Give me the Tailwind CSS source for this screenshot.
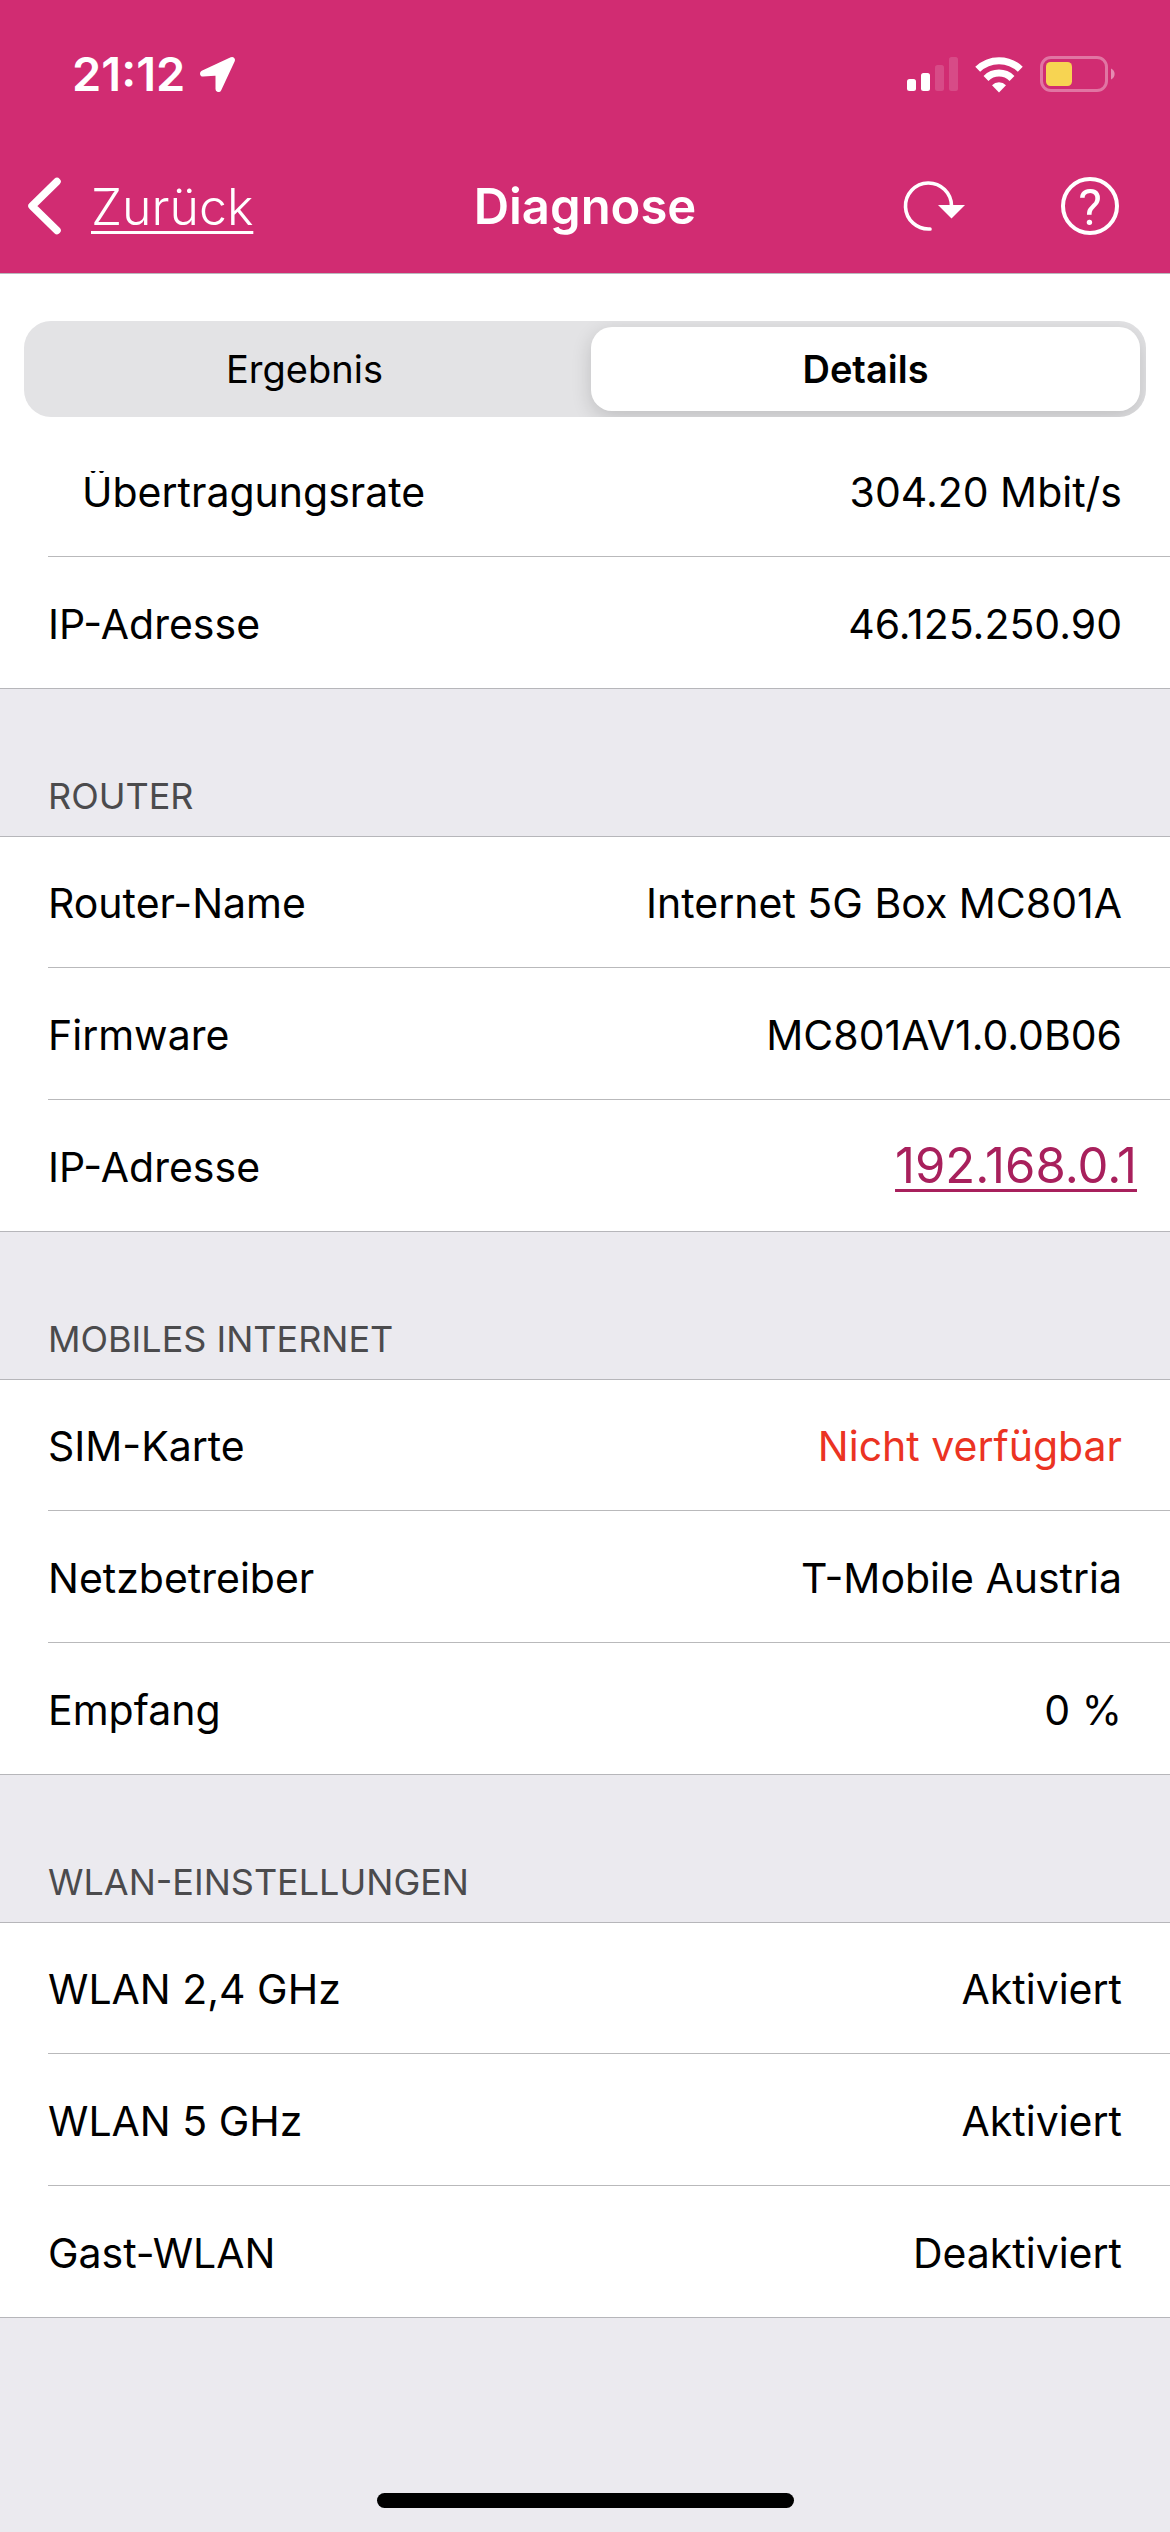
<!DOCTYPE html>
<html lang="de">
<head>
<meta charset="utf-8">
<meta name="viewport" content="width=device-width, initial-scale=1">
<title>Diagnose</title>
<script src="https://cdn.jsdelivr.net/npm/@tailwindcss/browser@4"></script>
</head>
<body class="flex min-h-screen flex-col bg-[#ebeaef] font-['Inter',sans-serif] text-[41px] leading-[50px] text-black">

<header class="border-b border-[#b9b9bc] bg-[#d12c72] pb-[9px] text-white">
  <!-- Status bar -->
  <div class="flex h-[148px] items-center justify-between pr-[54px] pl-[72px]">
    <div class="flex items-center gap-[13px]">
      <span class="text-[47px] font-semibold">21:12</span>
      <svg class="size-[38px]" viewBox="0 0 38 38" fill="white" stroke="white" stroke-width="6" stroke-linejoin="round" aria-hidden="true">
        <path d="M5 18.500L34 5L20.500 34V17.500Z"/>
      </svg>
    </div>
    <div class="flex items-center gap-[17px]">
      <svg class="h-[36px] w-[51px]" viewBox="0 0 51 36" fill="white" aria-hidden="true">
        <rect x="0" y="23" width="9" height="12" rx="2.500"/>
        <rect x="14" y="17" width="9" height="18" rx="2.500"/>
        <rect x="28" y="9" width="9" height="26" rx="2.500" fill-opacity=".15"/>
        <rect x="42" y="1" width="9" height="34" rx="2.500" fill-opacity=".15"/>
      </svg>
      <svg class="h-[37px] w-[48px]" viewBox="0 0 48 37" aria-hidden="true">
        <g fill="none" stroke="white" stroke-width="7">
          <path d="M2.700 13.300A30.500 30.500 0 0 1 45.300 13.300"/>
          <path d="M11 22.400A18.600 18.600 0 0 1 37 22.400"/>
        </g>
        <path d="M24 36.500L17 29.200A10 10 0 0 1 31 29.200Z" fill="white"/>
      </svg>
      <svg class="h-[36px] w-[76px]" viewBox="0 0 76 36" aria-hidden="true">
        <rect x="1.500" y="1.500" width="65" height="33" rx="9.500" fill="none" stroke="white" stroke-opacity=".35" stroke-width="3"/>
        <rect x="6" y="6" width="26" height="24" rx="4.500" fill="#f7d452"/>
        <path d="M71 12.500A6 6 0 0 1 71 23.500Z" fill="white" fill-opacity=".45"/>
      </svg>
    </div>
  </div>
  <!-- Navigation bar -->
  <nav class="grid h-[116px] grid-cols-[1fr_auto_1fr] items-center text-[49px] leading-[60px]">
    <a href="#" class="flex items-center gap-[29px] pl-[27px] text-[50px] font-light">
      <svg class="h-[58px] w-[35px]" viewBox="0 0 35 58" fill="none" stroke="white" stroke-width="7.500" stroke-linecap="round" stroke-linejoin="round" aria-hidden="true">
        <path d="M30 4.500L5 29L30 53.500"/>
      </svg>
      <span class="pt-[2px] underline decoration-[3px] underline-offset-[6px]">Zurück</span>
    </a>
    <h1 class="pt-[2px] font-semibold">Diagnose</h1>
    <div class="flex items-center justify-end gap-[96px] pr-[51px]">
      <button type="button" aria-label="Aktualisieren">
        <svg class="block h-[58px] w-[62px]" viewBox="0 0 62 58" aria-hidden="true">
          <path d="M27 52A23 23 0 1 1 48.500 29" fill="none" stroke="white" stroke-width="3.600" stroke-linecap="round"/>
          <path d="M35 28H62L48.500 41.500Z" fill="white"/>
        </svg>
      </button>
      <button type="button" aria-label="Hilfe">
        <svg class="block size-[58px]" viewBox="0 0 58 58" aria-hidden="true">
          <circle cx="29" cy="29" r="27" fill="none" stroke="white" stroke-width="4"/>
          <text x="29" y="48" text-anchor="middle" fill="white" class="font-['Roboto',sans-serif] text-[50px] font-normal">?</text>
        </svg>
      </button>
    </div>
  </nav>
</header>

<!-- Result / details switch -->
<div class="bg-white px-[24px] pt-[47px] pb-[54px]">
  <div role="tablist" class="grid grid-cols-2 overflow-hidden rounded-[27px] bg-[#e3e3e5] p-[6px] text-[38px]">
    <button type="button" role="tab" aria-selected="false" class="h-[84px] pr-[6px]">Ergebnis</button>
    <button type="button" role="tab" aria-selected="true" class="ml-[6px] h-[84px] rounded-[21px] bg-white font-semibold shadow-[0_6px_20px_rgba(0,0,0,0.16)]">Details</button>
  </div>
</div>

<main class="overflow-hidden">
  <!-- First row is partly scrolled out of view -->
  <section class="-mt-[46px] border-b border-[#b6b6ba] bg-white pl-[48px]">
    <dl class="divide-y divide-[#b9b9bb]">
      <div class="flex h-[132px] items-center justify-between pt-[2px] pr-[48px] pl-[34px]"><dt>Übertragungsrate</dt><dd>304.20 Mbit/s</dd></div>
      <div class="flex h-[131px] items-center justify-between pt-[2px] pr-[48px]"><dt>IP-Adresse</dt><dd>46.125.250.90</dd></div>
    </dl>
  </section>

  <section>
    <h2 class="px-[48px] pt-[82px] pb-[15px] text-[36px] text-[#4b4b4d]">ROUTER</h2>
    <dl class="divide-y divide-[#b9b9bb] border-y border-[#b6b6ba] bg-white pl-[48px]">
      <div class="flex h-[131px] items-center justify-between pt-[2px] pr-[48px]"><dt>Router-Name</dt><dd>Internet 5G Box MC801A</dd></div>
      <div class="flex h-[132px] items-center justify-between pt-[2px] pr-[48px]"><dt>Firmware</dt><dd>MC801AV1.0.0B06</dd></div>
      <div class="flex h-[131px] items-center justify-between pt-[2px] pr-[33px]"><dt>IP-Adresse</dt><dd><a href="http://192.168.0.1" class="text-[49px] text-[#a8205c] underline decoration-[3px] underline-offset-[6px]">192.168.0.1</a></dd></div>
    </dl>
  </section>

  <section>
    <h2 class="px-[48px] pt-[82px] pb-[15px] text-[36px] text-[#4b4b4d]">MOBILES INTERNET</h2>
    <dl class="divide-y divide-[#b9b9bb] border-y border-[#b6b6ba] bg-white pl-[48px]">
      <div class="flex h-[131px] items-center justify-between pt-[2px] pr-[48px]"><dt>SIM-Karte</dt><dd class="text-[#eb3323]">Nicht verfügbar</dd></div>
      <div class="flex h-[132px] items-center justify-between pt-[2px] pr-[48px]"><dt>Netzbetreiber</dt><dd>T-Mobile Austria</dd></div>
      <div class="flex h-[131px] items-center justify-between pt-[2px] pr-[48px]"><dt>Empfang</dt><dd>0 %</dd></div>
    </dl>
  </section>

  <section>
    <h2 class="px-[48px] pt-[82px] pb-[15px] text-[36px] text-[#4b4b4d]">WLAN-EINSTELLUNGEN</h2>
    <dl class="divide-y divide-[#b9b9bb] border-y border-[#b6b6ba] bg-white pl-[48px]">
      <div class="flex h-[131px] items-center justify-between pt-[2px] pr-[48px]"><dt>WLAN 2,4 GHz</dt><dd>Aktiviert</dd></div>
      <div class="flex h-[132px] items-center justify-between pt-[2px] pr-[48px]"><dt>WLAN 5 GHz</dt><dd>Aktiviert</dd></div>
      <div class="flex h-[131px] items-center justify-between pt-[2px] pr-[48px]"><dt>Gast-WLAN</dt><dd>Deaktiviert</dd></div>
    </dl>
  </section>
</main>

<!-- Home indicator -->
<div class="mx-auto mt-auto mb-[24px] h-[15px] w-[417px] rounded-full bg-black"></div>

</body>
</html>
